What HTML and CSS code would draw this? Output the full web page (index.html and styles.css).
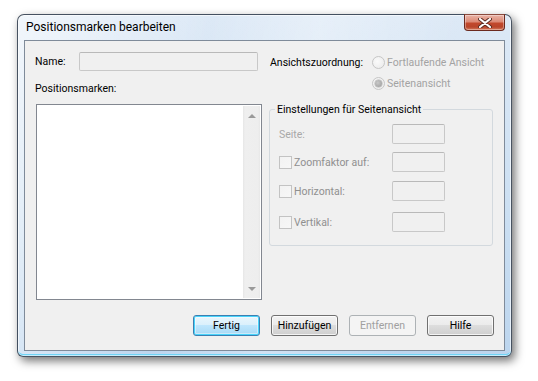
FILE: index.html
```html
<!DOCTYPE html>
<html lang="de">
<head>
<meta charset="utf-8">
<title>Positionsmarken bearbeiten</title>
<link rel="stylesheet" href="styles.css">
</head>
<body>
<div class="stage">
  <div class="window">
    <div class="titlebar"><span class="title">Positionsmarken bearbeiten</span></div>
    <div class="close" aria-label="Schließen">
      <svg width="14" height="10" viewBox="0 0 14 10">
        <path d="M2 1 L12 9 M12 1 L2 9" stroke="#5a2a20" stroke-width="4" stroke-linecap="round"/>
        <path d="M2 1 L12 9 M12 1 L2 9" stroke="#ffffff" stroke-width="2.2" stroke-linecap="round"/>
      </svg>
    </div>
    <div class="client">
      <div class="main">
        <div class="left">
          <div class="name-row">
            <span class="label name-label">Name:</span>
            <span class="field name-field"></span>
          </div>
          <div class="label list-label">Positionsmarken:</div>
          <div class="listbox">
            <div class="scrollbar">
              <span class="arrow up"></span>
              <span class="arrow down"></span>
            </div>
          </div>
        </div>
        <div class="right">
          <div class="assign-row">
            <span class="label assign-label">Ansichtszuordnung:</span>
            <div class="radios">
              <div class="radio-row"><span class="radio"></span><span class="dis">Fortlaufende Ansicht</span></div>
              <div class="radio-row"><span class="radio checked"></span><span class="dis">Seitenansicht</span></div>
            </div>
          </div>
          <fieldset class="group">
            <legend>Einstellungen für Seitenansicht</legend>
            <div class="opt-row r1"><span class="opt-label seite">Seite:</span><span class="field small"></span></div>
            <div class="opt-row r2"><span class="opt-label"><span class="check"></span>Zoomfaktor auf:</span><span class="field small"></span></div>
            <div class="opt-row r3"><span class="opt-label"><span class="check"></span>Horizontal:</span><span class="field small"></span></div>
            <div class="opt-row r4"><span class="opt-label"><span class="check"></span>Vertikal:</span><span class="field small"></span></div>
          </fieldset>
        </div>
      </div>
      <div class="buttons">
        <span class="btn default">Fertig</span>
        <span class="btn">Hinzufügen</span>
        <span class="btn disabled">Entfernen</span>
        <span class="btn">Hilfe</span>
      </div>
    </div>
  </div>
</div>
</body>
</html>
```

FILE: styles.css
```css
* { box-sizing: border-box; }
html, body { margin: 0; padding: 0; background: #ffffff; }
body {
  font-family: Roboto, "Noto Sans", sans-serif;
  font-size: 10.5px;
  font-weight: 400;
  color: #000;
  width: 538px;
  height: 381px;
  overflow: hidden;
}
.stage { padding: 14px 0 0 17px; }
.window {
  position: relative;
  width: 495px;
  height: 343px;
  border: 1px solid rgba(45, 55, 70, 0.85);
  border-radius: 7px 7px 6px 6px;
  padding: 0 6px 5px 6px;
  background:
    linear-gradient(100deg, rgba(255,255,255,0.6) 0%, rgba(255,255,255,0.0) 35%, rgba(255,255,255,0.3) 55%, rgba(255,255,255,0) 80%),
    linear-gradient(180deg, #dde9f6 0%, #cbdff2 60%, #bcd5ee 100%);
  box-shadow: 3px 4px 10px rgba(0,0,0,0.55), inset 0 0 0 1px rgba(255,255,255,0.6), inset 0 -2px 0 #6fd3f5;
}
.titlebar {
  height: 25px;
  padding: 4px 0 0 2px;
  font-size: 12px;
  line-height: 17px;
  color: #000;
}
.close {
  position: absolute;
  top: -1px;
  right: 6px;
  width: 41px;
  height: 17px;
  border: 1px solid #6b2a1f;
  border-top-color: #8a4a3d;
  border-radius: 0 0 4px 4px;
  background: linear-gradient(180deg, #eab3a6 0%, #dc8a76 45%, #c2482c 55%, #b8452a 80%, #d77c5f 100%);
  box-shadow: inset 0 0 0 1px rgba(255,255,255,0.35);
  display: flex;
  align-items: center;
  justify-content: center;
}
.close svg { display: block; }
.client {
  height: 311px;
  background: #f0f0f0;
  border: 1px solid #7f8b9a;
  display: flex;
  flex-direction: column;
}
.main {
  display: flex;
  gap: 7px;
  padding-left: 10px;
}
.left { width: 227px; }
.label { line-height: 15px; }
.name-row {
  display: flex;
  align-items: center;
  margin-top: 11px;
}
.name-label { width: 44px; }
.field {
  display: block;
  background: #f0f0f0;
  border: 1px solid #c8c8c8;
  border-top-color: #b9b9b9;
  border-radius: 2px;
}
.name-field { width: 179px; height: 19px; }
.list-label { margin-top: 10px; }
.listbox {
  margin: 8px 0 0 1px;
  width: 226px;
  height: 196px;
  background: #fff;
  border: 1px solid #828790;
  display: flex;
  justify-content: flex-end;
  padding: 1px;
}
.scrollbar {
  width: 17px;
  background: linear-gradient(90deg, #e6e6e6 0px, #efefef 2px, #eeeeee 15px, #e8e8e8 17px);
  display: flex;
  flex-direction: column;
  justify-content: space-between;
  align-items: center;
  padding: 8px 0 7px 1px;
}
.arrow {
  width: 0; height: 0;
  border-left: 4px solid transparent;
  border-right: 4px solid transparent;
}
.arrow.up { border-bottom: 4px solid #9a9a9a; }
.arrow.down { border-top: 4px solid #9a9a9a; }
.right { width: 224px; }
.assign-row {
  display: flex;
  margin-top: 11px;
  padding-left: 1px;
}
.assign-label { width: 102px; line-height: 21px; white-space: nowrap; }
.radios { display: flex; flex-direction: column; }
.radio-row {
  height: 21px;
  display: flex;
  align-items: center;
  white-space: nowrap;
}
.dis { color: #a3a3a3; }
.radio {
  flex: none;
  width: 13px; height: 13px;
  border-radius: 50%;
  border: 1px solid #c6c6c6;
  background: radial-gradient(circle at 40% 40%, #fafafa, #e9e9e9);
  margin-right: 2px;
  position: relative;
}
.radio.checked::after {
  content: "";
  position: absolute;
  left: 2px; top: 2px;
  width: 7px; height: 7px;
  border-radius: 50%;
  background: radial-gradient(circle at 40% 40%, #c8c8c8, #9a9a9a);
  box-shadow: 0 0 0 0.5px #b5b5b5;
}
.group {
  margin: 8px 0 0 0;
  padding: 7px 0 13px 9px;
  border: 1px solid #d3d9de;
  border-radius: 3px;
  min-width: 0;
  width: 224px;
}
.group legend {
  margin-left: -4px;
  padding: 0 2px;
  line-height: 15px;
  color: #000;
}
.opt-row {
  display: flex;
  align-items: center;
  height: 20px;
}
.r2 { margin-top: 8px; }
.r3 { margin-top: 9px; }
.r4 { margin-top: 11px; }
.opt-label {
  width: 113px;
  color: #8f8f8f;
  display: flex;
  align-items: center;
}
.opt-label.seite { color: #a8a8a8; }
.check {
  flex: none;
  width: 13px; height: 13px;
  border: 1px solid #c3c3c3;
  background: linear-gradient(135deg, #f2f2f2, #f7f7f7);
  margin-right: 2px;
}
.field.small { width: 53px; height: 20px; }
.buttons {
  display: flex;
  gap: 11px;
  padding-left: 168px;
  margin-top: 15px;
}
.btn {
  width: 67px;
  height: 21px;
  border: 1px solid #707070;
  border-radius: 3px;
  background: linear-gradient(180deg, #f2f2f2 0%, #ebebeb 50%, #dddddd 50%, #cfcfcf 100%);
  box-shadow: inset 0 0 0 1px rgba(255,255,255,0.75);
  display: flex;
  align-items: center;
  justify-content: center;
  line-height: 15px;
}
.btn.default {
  border-color: #3c7fb1;
  background: linear-gradient(180deg, #eaf6fd 0%, #d9f0fc 50%, #bee6fd 50%, #a7d9f5 100%);
  box-shadow: inset 0 0 0 1px #48d4fb, inset 0 0 0 2px rgba(255,255,255,0.4);
}
.btn.disabled {
  border-color: #adb2b5;
  background: #f4f4f4;
  box-shadow: none;
  color: #a0a0a0;
}
```
